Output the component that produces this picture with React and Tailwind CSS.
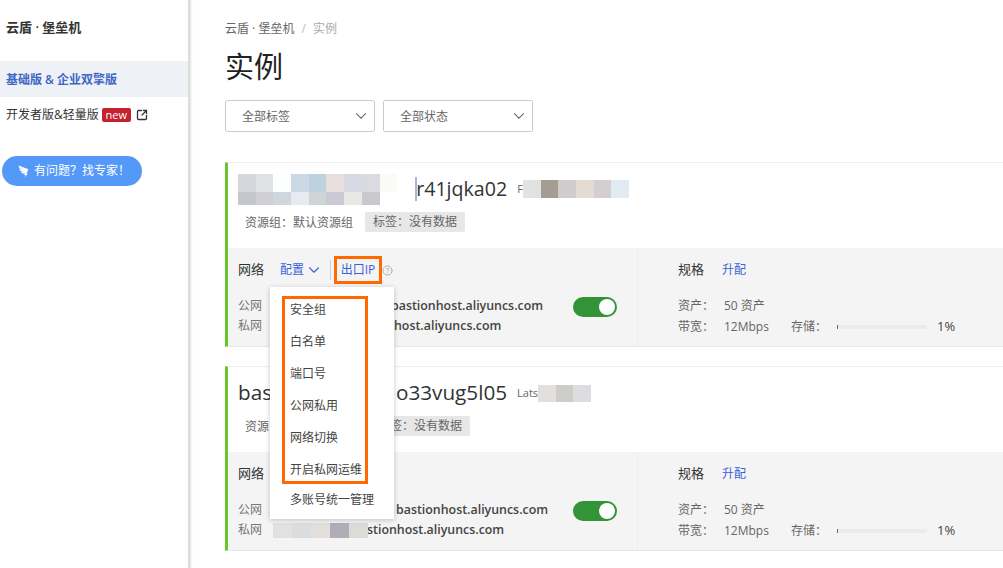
import React from "react";
import { ChevronDown, CircleHelp, SquareArrowOutUpRight } from "lucide-react";
import { AiOutlineDingtalk } from "react-icons/ai";

const FONT = "font-['Open_Sans','Noto_Sans_CJK_SC',sans-serif]";

// bloques del mosaico que tapan datos
function Mosaico({ filas, ancho, altos, className = "" }) {
  return (
    <div className={`flex flex-col ${className}`}>
      {filas.map((fila, i) => (
        <div key={i} className="flex">
          {fila.map((color, j) => (
            <div key={j} style={{ width: ancho, height: altos[i], background: color }} />
          ))}
        </div>
      ))}
    </div>
  );
}

function Interruptor() {
  return (
    <div className="w-[44px] h-[20px] rounded-full bg-[#339437] flex items-center justify-end pr-[2px]">
      <div className="w-[16px] h-[16px] rounded-full bg-white" />
    </div>
  );
}

function FilaRed({ etiqueta, sangria, texto, tapa }) {
  return (
    <div className="relative flex items-center h-[20px] text-[12px]">
      <span className="w-[34px] text-[#777]">{etiqueta}</span>
      <span style={{ marginLeft: sangria }} className="text-[12.4px] font-semibold text-[#444] whitespace-nowrap">{texto}</span>
      {tapa}
    </div>
  );
}

function Especificaciones() {
  return (
    <div className="w-[366px] border-l border-[#eeeeee] pl-[40px] pt-[12px]">
      <div className="flex items-center h-[20px]">
        <span className="text-[13px] text-[#333] w-[44px]">规格</span>
        <span className="text-[12px] text-[#3b63d8]">升配</span>
      </div>
      <div className="mt-[15px] text-[12px] text-[#666]">
        <div className="flex items-center h-[21px]">
          <span className="w-[46px]">资产：</span>
          <span>50 资产</span>
        </div>
        <div className="flex items-center h-[21px]">
          <span className="w-[46px]">带宽：</span>
          <span className="w-[67px] whitespace-nowrap">12Mbps</span>
          <span className="w-[46px]">存储：</span>
          <div className="w-[90px] h-[4px] bg-[#ebebeb] rounded-full">
            <div className="w-[1px] h-[4px] bg-[#339437]" />
          </div>
          <span className="ml-[10px] text-[13px] text-[#444]">1%</span>
        </div>
      </div>
    </div>
  );
}

function Tarjeta({ titulo, resumen, etiquetaAncho, cabeceraRed, filas, className = "" }) {
  return (
    <div className={`border-l-[3px] border-[#67c72c] border-t border-t-[#eeeeee] border-b border-b-[#e6e6e6] ${className}`}>
      <div className="h-[85px] pl-[10px] pt-[10px]">
        <div className="flex items-center h-[32px] text-[#333] whitespace-nowrap">{titulo}</div>
        <div className="flex items-center h-[20px] mt-[7px] pl-[7px] text-[12px] text-[#666]">
          <span className="w-[120px] pt-[1px]">{resumen}</span>
          <span style={{ width: etiquetaAncho }} className="h-[20px] flex items-center justify-end pr-[8px] bg-[#e7e7e7] rounded-[2px] whitespace-nowrap">
            标签：没有数据
          </span>
        </div>
      </div>
      <div className="h-[98px] bg-[#f4f4f4] flex">
        <div className="w-[409px] pl-[10px] pt-[12px]">
          {cabeceraRed}
          <div className="mt-[16px] relative">
            {filas}
            <div className="absolute left-[335px] top-[1px]">
              <Interruptor />
            </div>
          </div>
        </div>
        <Especificaciones />
      </div>
    </div>
  );
}

export default function App() {
  const itemsMarcados = ["安全组", "白名单", "端口号", "公网私用", "网络切换", "开启私网运维"];

  return (
    <div className={`${FONT} w-[1003px] h-[568px] overflow-hidden bg-white flex`}>
      {/* MENU LATERAL */}
      <aside className="w-[190px] shrink-0 border-r-2 border-[#dddddd] shadow-[1px_0_2px_rgba(0,0,0,0.12)]">
        <div className="h-[61px] pt-[18px] pl-[6px] text-[13px] font-semibold text-[#333]">云盾 · 堡垒机</div>
        <div className="h-[36px] bg-[#eef1f6] pl-[6px] pt-[2px] flex items-center text-[12px] font-semibold text-[#3f66c6]">
          基础版 &amp; 企业双擎版
        </div>
        <div className="h-[36px] pl-[6px] flex items-center text-[12px] text-[#333]">
          <span>开发者版&amp;轻量版</span>
          <span className="ml-[3px] w-[29px] h-[14px] bg-[#c4222f] rounded-[2px] text-white text-[11px] leading-[14px] text-center">new</span>
          <SquareArrowOutUpRight size={12} strokeWidth={2.6} className="ml-[5px] text-[#333]" />
        </div>
        <div className="mt-[23px] ml-[2px] w-[140px] h-[30px] rounded-full bg-[#5599f8] flex items-center pl-[14px] text-white text-[12px]">
          <AiOutlineDingtalk size={15} />
          <span className="ml-[3px]">有问题？找专家！</span>
        </div>
      </aside>

      {/* CONTENIDO */}
      <main className="relative flex-1 pl-[35px] pt-[20px]">
        <div className="text-[12px] leading-[18px] text-[#666]">
          云盾 · 堡垒机 <span className="mx-[4px] text-[#bbb]">/</span> <span className="text-[#aaa]">实例</span>
        </div>
        <h1 className="mt-[9px] text-[29px] leading-[40px] text-[#222]">实例</h1>

        <div className="mt-[13px] flex gap-[8px]">
          {["全部标签", "全部状态"].map((t) => (
            <div key={t} className="w-[150px] h-[32px] border border-[#cccccc] rounded-[2px] pl-[16px] pr-[4px] flex items-center justify-between text-[12px] text-[#666]">
              <span className="pt-[2px]">{t}</span>
              <ChevronDown size={18} strokeWidth={1.4} className="text-[#444]" />
            </div>
          ))}
        </div>

        <Tarjeta
          className="mt-[30px]"
          resumen="资源组：默认资源组"
          etiquetaAncho="100px"
          titulo={
            <>
              <Mosaico
                ancho={17.7}
                altos={[18, 13]}
                filas={[
                  ["#d5d7dc", "#e0e1e5", "#fdfefe", "#ccd8e4", "#bed1df", "#e6dfdc", "#d7dae2", "#dadbe0", "#fafaf6"],
                  ["#c3c6ca", "#d0cfd5", "#cfd7de", "#e7ebef", "#cfd4d4", "#cbcad4", "#e8e8e4", "#c8c8ce", "#ffffff"],
                ]}
              />
              <div className="ml-[18px] w-[2px] h-[24px] bg-[#a9b7d2]" />
              <span className="-ml-[1px] text-[19.6px]">r41jqka02</span>
              <span className="ml-[10px] text-[11px] text-[#666]">F</span>
              <Mosaico ancho={17.7} altos={[18]} filas={[["#e2e2e2", "#a69d92", "#d0cccc", "#e4dcd2", "#d3cfd0", "#e1ebf4"]]} />
            </>
          }
          cabeceraRed={
            <div className="flex items-center h-[20px]">
              <span className="text-[13px] text-[#333] w-[42px]">网络</span>
              <span className="text-[12px] text-[#3b63d8]">配置</span>
              <ChevronDown size={18} strokeWidth={1.5} className="ml-[1px] text-[#3b63d8]" />
              <div className="ml-[7px] w-px h-[20px] bg-[#cfcfcf]" />
              <div className="ml-[3px] w-[48px] h-[28px] border-[3px] border-[#ff6a00] flex items-center justify-center text-[12px] text-[#3b63d8] whitespace-nowrap">
                出口IP
              </div>
              <CircleHelp size={11} className="text-[#aaa]" />
            </div>
          }
          filas={
            <>
              <FilaRed etiqueta="公网" sangria="119px" texto="bastionhost.aliyuncs.com" />
              <FilaRed etiqueta="私网" sangria="122px" texto="host.aliyuncs.com" />
            </>
          }
        />

        <Tarjeta
          className="mt-[19px]"
          resumen="资源"
          etiquetaAncho="105px"
          titulo={
            <>
              <span className="text-[20.7px] w-[158px]">bas</span>
              <span className="text-[20.7px]">o33vug5l05</span>
              <span className="ml-[10px] text-[11px] text-[#666]">Lats</span>
              <Mosaico ancho={17.7} altos={[17]} filas={[["#e3dfdc", "#cfcdca", "#dddde0"]]} />
            </>
          }
          cabeceraRed={
            <div className="flex items-center h-[20px]">
              <span className="text-[13px] text-[#333]">网络</span>
            </div>
          }
          filas={
            <>
              <FilaRed etiqueta="公网" sangria="124px" texto="bastionhost.aliyuncs.com" />
              <FilaRed
                etiqueta="私网"
                sangria="95px"
                texto="stionhost.aliyuncs.com"
                tapa={
                  <Mosaico
                    ancho={19}
                    altos={[15]}
                    className="absolute left-[35px] top-[3px]"
                    filas={[["#e2e1e0", "#d9dde0", "#e4dfdc", "#afaeb8", "#dddbd8"]]}
                  />
                }
              />
            </>
          }
        />

        {/* MENU DESPLEGABLE */}
        <div className="absolute left-[80px] top-[287px] w-[124px] h-[232px] bg-white shadow-[0_1px_5px_rgba(0,0,0,0.22)] pl-[12px] pt-[9px] text-[12px] text-[#444]">
          <div className="border-[3px] border-[#ff6a00] h-[188px] w-[86px] pl-[5px] flex flex-col gap-[10px]">
            {itemsMarcados.map((t) => (
              <div key={t} className="h-[22px] flex items-center whitespace-nowrap">{t}</div>
            ))}
          </div>
          <div className="pl-[8px] mt-[1px] h-[30px] flex items-center whitespace-nowrap">多账号统一管理</div>
        </div>
      </main>
    </div>
  );
}
